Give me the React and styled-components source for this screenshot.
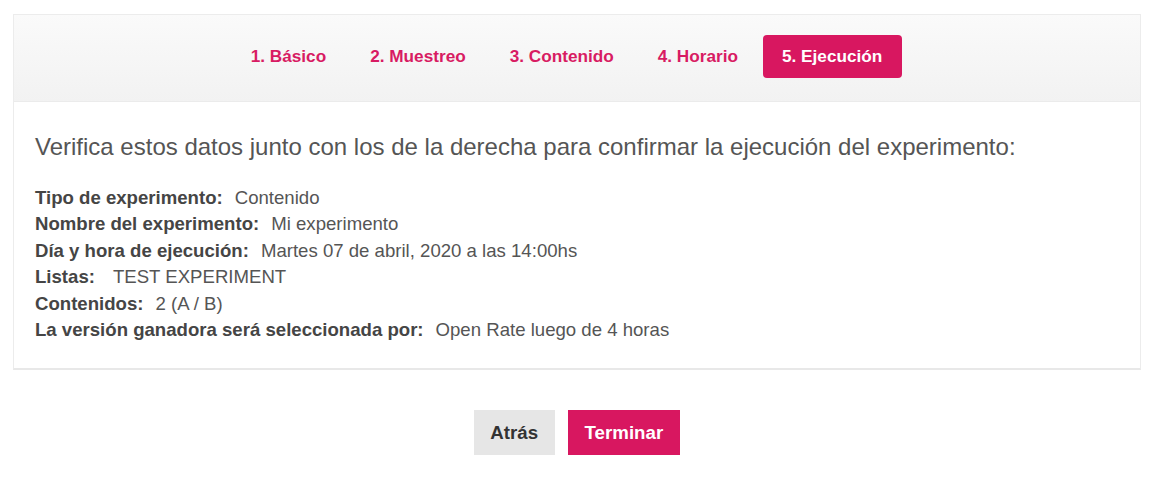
import React from "react";
import styled, { createGlobalStyle } from "styled-components";

const GlobalStyle = createGlobalStyle`
  body {
    margin: 0;
    background: #ffffff;
    font-family: "Liberation Sans", Arial, sans-serif;
  }
`;

const Page = styled.div`
  padding: 14px 21px 0 13px;
`;

const Card = styled.div`
  border: 1px solid #ececec;
  border-bottom: 2px solid #e8e8e8;
  background: #ffffff;
`;

const StepBar = styled.div`
  height: 87px;
  box-sizing: border-box;
  padding: 20px 21px 0 0;
  display: flex;
  align-items: flex-start;
  justify-content: center;
  background: linear-gradient(#fafafa, #f2f2f2);
  border-bottom: 1px solid #ebebeb;
`;

const Steps = styled.ul`
  list-style: none;
  margin: 0;
  padding: 0;
  display: flex;
  gap: 5px;
`;

const Step = styled.li`
  height: 43px;
  padding: 0 19.5px;
  display: flex;
  align-items: center;
  border-radius: 4px;
  font-size: 17.2px;
  font-weight: bold;
  color: ${(props) => (props.active ? "#ffffff" : "#d81b63")};
  background: ${(props) => (props.active ? "#d81760" : "transparent")};
  cursor: pointer;
`;

const Body = styled.div`
  padding: 31px 21px 25px;
`;

const Title = styled.p`
  margin: 0 0 24px;
  font-size: 24px;
  color: #555555;
  line-height: 28px;
`;

const Details = styled.div`
  display: flex;
  flex-direction: column;
`;

const Row = styled.div`
  font-size: 18.6px;
  line-height: 26.4px;
  color: #555555;
`;

const Label = styled.span`
  font-weight: bold;
  color: #454545;
  margin-right: ${(props) => props.space || 12}px;
`;

const Actions = styled.div`
  display: flex;
  justify-content: center;
  gap: 13px;
  margin-top: 40px;
`;

const Button = styled.button`
  height: 45px;
  padding: 0 ${(props) => (props.primary ? 17 : 16.5)}px;
  border: none;
  border-radius: 0;
  font-family: "Liberation Sans", Arial, sans-serif;
  font-size: 18.7px;
  font-weight: bold;
  color: ${(props) => (props.primary ? "#ffffff" : "#333333")};
  background: ${(props) => (props.primary ? "#d81760" : "#e6e6e6")};
  cursor: pointer;
`;

const steps = ["1. Básico", "2. Muestreo", "3. Contenido", "4. Horario", "5. Ejecución"];

const details = [
  ["Tipo de experimento:", "Contenido"],
  ["Nombre del experimento:", "Mi experimento"],
  ["Día y hora de ejecución:", "Martes 07 de abril, 2020 a las 14:00hs"],
  ["Listas:", "TEST EXPERIMENT", 18],
  ["Contenidos:", "2 (A / B)"],
  ["La versión ganadora será seleccionada por:", "Open Rate luego de 4 horas"],
];

const App = () => {
  return (
    <Page>
      <GlobalStyle />
      <Card>
        <StepBar>
          <Steps>
            {steps.map((step, index) => (
              <Step key={step} active={index === steps.length - 1}>
                {step}
              </Step>
            ))}
          </Steps>
        </StepBar>
        <Body>
          <Title>
            Verifica estos datos junto con los de la derecha para confirmar la ejecución del experimento:
          </Title>
          <Details>
            {details.map(([label, value, space]) => (
              <Row key={label}>
                <Label space={space}>{label}</Label>
                {value}
              </Row>
            ))}
          </Details>
        </Body>
      </Card>
      <Actions>
        <Button>Atrás</Button>
        <Button primary>Terminar</Button>
      </Actions>
    </Page>
  );
};

export default App;
